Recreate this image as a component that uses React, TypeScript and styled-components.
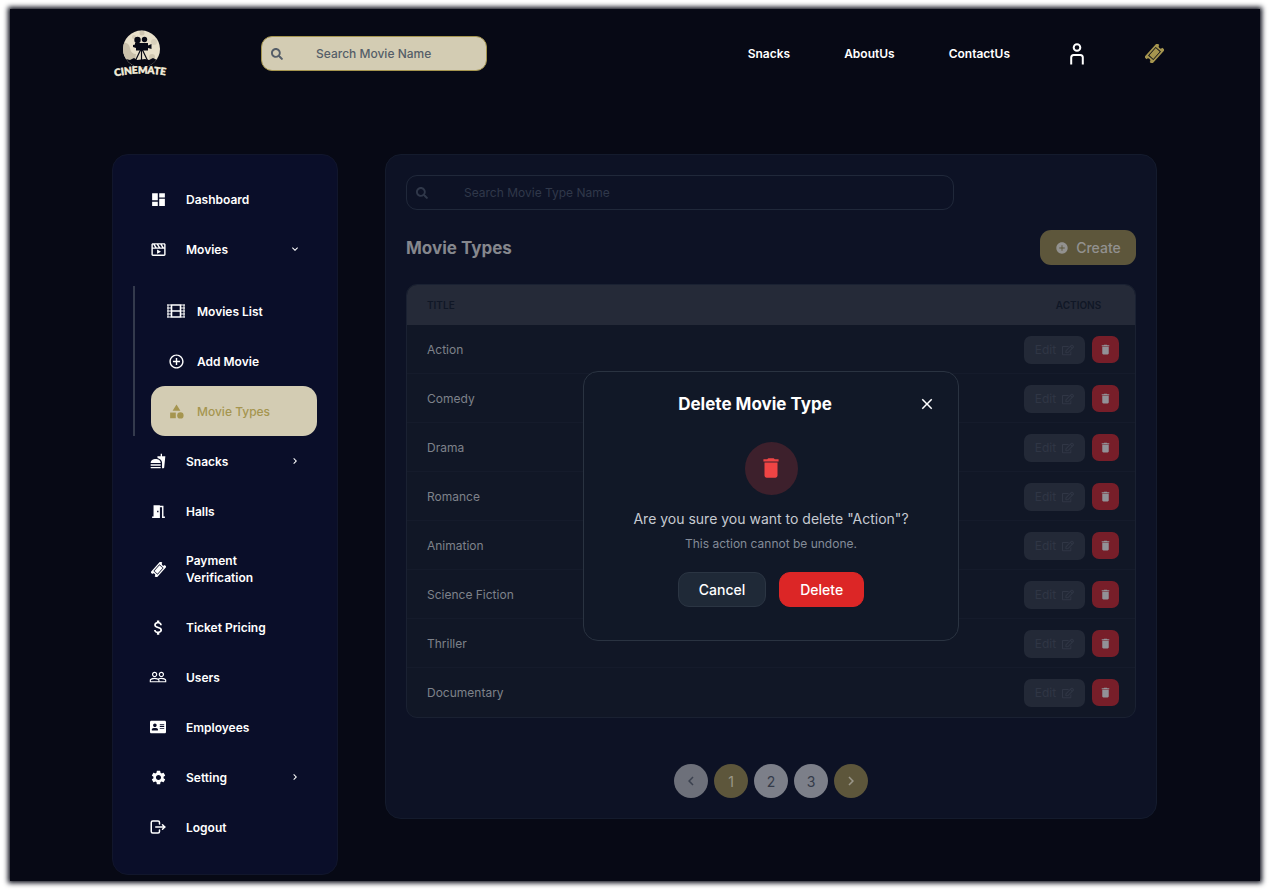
import React from "react";
import styled, { createGlobalStyle, css } from "styled-components";
import {
  MdAddCircleOutline,
  MdAttachMoney,
  MdCategory,
  MdChevronLeft,
  MdChevronRight,
  MdClose,
  MdDashboard,
  MdDelete,
  MdFastfood,
  MdKeyboardArrowDown,
  MdKeyboardArrowRight,
  MdMeetingRoom,
  MdPeopleOutline,
  MdSettings,
} from "react-icons/md";
import { BiMoviePlay } from "react-icons/bi";
import { FaAddressCard, FaRegEdit, FaSearch } from "react-icons/fa";
import { IoIosAddCircle } from "react-icons/io";
import { TbLogout } from "react-icons/tb";

const color = {
  page: "#070915",
  sidebar: "#0a0e29",
  panel: "#0d1225",
  panelLine: "#141b2d",
  gold: "#a5954f",
  sand: "#d3ccb3",
  goldDim: "#5d563b",
  surface: "#111827",
  line: "#2a3341",
  textDim: "#85878d",
};

const GlobalStyle = createGlobalStyle`
  * { box-sizing: border-box; }
  body {
    margin: 0;
    background: #fff;
    color: #fff;
    font-family: Inter, "Open Sans", sans-serif;
    font-size: 12px;
    display: flow-root;
  }
  button, input { font: inherit; color: inherit; }
  button { cursor: pointer; border: 0; background: none; padding: 0; }
  a { color: inherit; text-decoration: none; }
  svg { display: block; flex-shrink: 0; }
`;

const Frame = styled.div`
  margin: 9px 9px 9px 10px;
  background: ${color.page};
  box-shadow: 0 0 5px 2px ${color.page};
`;

const Header = styled.header`
  display: flex;
  align-items: center;
  height: 97px;
  padding: 0 96px 8px 102px;
`;

const LogoLink = styled.a`
  display: block;
  width: 60px;
  margin-right: 89px;
`;

const SearchBox = styled.label<{ $solid?: boolean }>`
  display: flex;
  align-items: center;
  height: 35px;
  border-radius: 11px;
  padding-left: 9px;
  ${(p) =>
    p.$solid
      ? css`
          width: 226px;
          gap: 33px;
          background: ${color.sand};
          border: 1px solid ${color.gold};
          color: #555e68;
          font-weight: 500;
        `
      : css`
          width: 75%;
          gap: 36px;
          border: 1px solid #20283a;
          color: #30384a;
        `}
`;

const SearchInput = styled.input`
  flex: 1;
  min-width: 0;
  border: 0;
  outline: 0;
  padding: 0;
  background: transparent;
  &::placeholder { color: inherit; opacity: 1; }
`;

const TopNav = styled.nav`
  display: flex;
  align-items: center;
  gap: 54px;
  margin-left: auto;
  font-weight: 600;
`;

const NavIcon = styled.a<{ $gold?: boolean }>`
  display: flex;
  justify-content: center;
  width: ${(p) => (p.$gold ? 20 : 26)}px;
  color: ${(p) => (p.$gold ? color.gold : "#fff")};
`;

const Body = styled.div`
  display: flex;
  align-items: flex-start;
  gap: 47px;
  padding: 48px 103px 6px 102px;
`;

const Sidebar = styled.nav`
  flex: 0 0 226px;
  padding: 19px 20px 22px;
  background: ${color.sidebar};
  border: 1px solid #11162c;
  border-radius: 16px;
`;

const MenuItem = styled.a<{ $active?: boolean; $nested?: boolean }>`
  display: flex;
  align-items: center;
  gap: ${(p) => (p.$nested ? 12 : 19)}px;
  min-height: 50px;
  padding: 16px;
  border-radius: 14px;
  font-weight: 600;
  line-height: 17px;
  ${(p) =>
    p.$active &&
    css`
      background: ${color.sand};
      color: ${color.gold};
      font-weight: 500;
    `}
`;

const MenuIcon = styled.span`
  display: flex;
  align-items: center;
  justify-content: center;
  width: 18px;
  height: 18px;
`;

const MenuLabel = styled.span`
  flex: 1;
`;

const SubMenu = styled.div`
  margin-top: 12px;
  padding-left: 16px;
  border-left: 2px solid #343a4d;
`;

const Panel = styled.main`
  position: relative;
  flex: 1;
  min-width: 0;
  padding: 20px;
  background: ${color.panel};
  border: 1px solid ${color.panelLine};
  border-radius: 16px;
`;

const TitleBar = styled.div`
  display: flex;
  align-items: center;
  justify-content: space-between;
  margin: 20px 0 19px;
`;

const Title = styled.h1`
  margin: 0;
  color: ${color.textDim};
  font-size: 17px;
  font-weight: 700;
`;

const CreateButton = styled.button`
  display: flex;
  align-items: center;
  justify-content: center;
  gap: 7px;
  width: 96px;
  height: 35px;
  border-radius: 11px;
  background: ${color.goldDim};
  color: #92918f;
  font-size: 14px;
  font-weight: 500;
`;

const TableCard = styled.div`
  overflow: hidden;
  border: 1px solid #1a2132;
  border-radius: 11px;
  background: #111726;
`;

const Table = styled.table`
  width: 100%;
  border-collapse: collapse;
`;

const HeadCell = styled.th<{ $actions?: boolean }>`
  height: 40px;
  width: ${(p) => (p.$actions ? "113px" : "auto")};
  padding: 0 ${(p) => (p.$actions ? 0 : 20)}px;
  background: #252a38;
  color: #101726;
  font-size: 10px;
  font-weight: 600;
  text-align: ${(p) => (p.$actions ? "center" : "left")};
`;

const Row = styled.tr`
  &:not(:last-child) { box-shadow: inset 0 -1px #151b2b; }
`;

const Cell = styled.td`
  height: 49px;
  padding: 0 16px 0 20px;
  color: #7e828a;
`;

const ActionCell = styled.td`
  padding: 0 16px 0 0;
`;

const RowActions = styled.div`
  display: flex;
  align-items: center;
  justify-content: flex-end;
  gap: 7px;
`;

const EditButton = styled.button`
  display: flex;
  align-items: center;
  justify-content: center;
  gap: 6px;
  width: 61px;
  height: 28px;
  border-radius: 7px;
  background: #232937;
  color: #303645;
`;

const RemoveButton = styled.button`
  display: grid;
  place-items: center;
  width: 27px;
  height: 27px;
  border-radius: 7px;
  background: #771e29;
  color: #929197;
`;

const Pagination = styled.nav`
  display: flex;
  justify-content: center;
  gap: 6px;
  margin-top: 46px;
`;

const PageButton = styled.button<{ $tone: "gold" | "grey" | "muted" }>`
  display: grid;
  place-items: center;
  width: 34px;
  height: 34px;
  border-radius: 50%;
  font-size: 14px;
  background: ${(p) =>
    ({ gold: color.goldDim, grey: "#7c7f89", muted: "#6d707a" })[p.$tone]};
  color: ${(p) =>
    ({ gold: "#9a9689", grey: "#343b49", muted: "#3a404e" })[p.$tone]};
`;

/* Sits over the panel content, a little below its middle. */
const DialogLayer = styled.div`
  position: absolute;
  inset: 38px 0 0;
  display: grid;
  place-items: center;
`;

const Dialog = styled.section`
  width: 376px;
  padding: 20px 22px 33px;
  background: ${color.surface};
  border: 1px solid ${color.line};
  border-radius: 15px;
  text-align: center;
`;

const DialogHeader = styled.div`
  display: flex;
  align-items: center;
  height: 24px;
`;

const DialogTitle = styled.h2`
  flex: 1;
  margin: 0;
  font-size: 17px;
  font-weight: 700;
`;

const CloseButton = styled.button`
  display: flex;
  justify-content: flex-end;
  width: 32px;
`;

const WarningBadge = styled.div`
  display: grid;
  place-items: center;
  width: 53px;
  height: 53px;
  margin: 26px auto 14px;
  border-radius: 50%;
  background: #3d202c;
  color: #ef4444;
`;

const Question = styled.p`
  margin: 0;
  color: #c6cad1;
  font-size: 14px;
  line-height: 20px;
`;

const Hint = styled.p`
  margin: 5px 0 18px;
  color: #838b98;
  line-height: 20px;
`;

const DialogActions = styled.div`
  display: flex;
  justify-content: center;
  gap: 13px;
`;

const DialogButton = styled.button<{ $danger?: boolean }>`
  height: 35px;
  padding: 0 20px;
  border: 1px solid ${(p) => (p.$danger ? "#dc2626" : "#2b3543")};
  border-radius: 11px;
  background: ${(p) => (p.$danger ? "#dc2626" : "#1f2937")};
  font-size: 14px;
  font-weight: 500;
`;

const LogoText = styled.text`
  fill: #f3eddb;
  stroke: #f3eddb;
  stroke-width: 0.5px;
  font-family: Lato, sans-serif;
  font-size: 10px;
  font-weight: 900;
`;

function Logo() {
  return (
    <svg viewBox="0 0 60 50" width="60" height="50" role="img" aria-label="Cinemate">
      <defs>
        <path id="logo-arc" d="M3 47.500Q29 41.500 59 47.500" />
        <clipPath id="moon">
          <circle cx="29.500" cy="20" r="18.500" />
        </clipPath>
      </defs>
      <g clipPath="url(#moon)">
        <rect x="10" width="40" height="40" fill="#e9e1cb" />
        <path d="M10 14q7-1 8 5t6 6l-2 12H10z" fill="#c9c0aa" />
        <circle cx="30" cy="4" r="2.500" fill="#d0c7b1" />
        <circle cx="22" cy="8" r="2" fill="#d5ccb7" />
        <circle cx="42" cy="13" r="3" fill="#d8d0bb" />
        <circle cx="40" cy="28" r="3" fill="#d0c7b1" />
        <path d="M8 33l6-3 4 1 4-2 3 2 8-1 4 1 4-2 4 2 5-1v10H8z" fill={color.page} />
      </g>
      <g fill={color.page}>
        <circle cx="25.500" cy="11" r="3.200" />
        <circle cx="32.500" cy="10.500" r="2.700" />
        <path d="M23 14h13v2.500l3.500-1.500v5l-3.500-1v2.500H24v-2.500l-3-1v-2l2-.5z" />
      </g>
      <path d="M29.500 21v11M28.500 21l-5 10.500M30.500 21l5 10.500" stroke={color.page} strokeWidth="1.200" />
      <LogoText>
        <textPath href="#logo-arc">CINEMATE</textPath>
      </LogoText>
    </svg>
  );
}

type IconProps = { size?: number };

function PersonIcon() {
  return (
    <svg viewBox="0 0 14 22" width="14" height="22" fill="none" stroke="currentColor" strokeWidth="2">
      <circle cx="7" cy="4.500" r="3.300" />
      <path d="M1.200 21.500v-7q0-2.500 2.500-2.500h6.600q2.500 0 2.500 2.500v7" />
    </svg>
  );
}

function TicketIcon({ size = 20 }: IconProps) {
  return (
    <svg viewBox="0 0 20 20" width={size} height={size} fill="currentColor">
      <g transform="rotate(-48 10 10)">
        <path
          fillRule="evenodd"
          d="M0 4.500h20v3.300a2.200 2.200 0 0 0 0 4.400v3.300H0v-3.300a2.200 2.200 0 0 0 0-4.400zM4 6.300v7.400h12V6.300zM4.900 7.200h10.200v5.600H4.900z"
        />
      </g>
    </svg>
  );
}

function FilmIcon({ size = 18 }: IconProps) {
  return (
    <svg viewBox="0 0 18 14" width={size} height={(size * 14) / 18} fill="none" stroke="currentColor">
      <path d="M4.500 1h9v12h-9zM4.500 7h9" strokeWidth="1.600" />
      <path d="M1 .5v13M17 .5v13" strokeWidth="1" />
      <path d="M0 1h4M0 4h4M0 7h4M0 10h4M0 13h4M14 1h4M14 4h4M14 7h4M14 10h4M14 13h4" strokeWidth="1.200" />
    </svg>
  );
}

type Icon = React.ComponentType<IconProps>;

type Entry = {
  label: React.ReactNode;
  icon: Icon;
  size?: number;
  more?: boolean;
};

const subEntries: Entry[] = [
  { label: "Movies List", icon: FilmIcon, size: 18 },
  { label: "Add Movie", icon: MdAddCircleOutline },
  { label: "Movie Types", icon: MdCategory },
];

const entries: Entry[] = [
  { label: "Snacks", icon: MdFastfood, size: 16, more: true },
  { label: "Halls", icon: MdMeetingRoom },
  { label: <>Payment<br />Verification</>, icon: TicketIcon, size: 15 },
  { label: "Ticket Pricing", icon: MdAttachMoney, size: 19 },
  { label: "Users", icon: MdPeopleOutline, size: 18 },
  { label: "Employees", icon: FaAddressCard, size: 16 },
  { label: "Setting", icon: MdSettings, more: true },
  { label: "Logout", icon: TbLogout, size: 18 },
];

function MenuEntry({
  entry,
  nested,
  active,
  chevron: Chevron,
}: {
  entry: Entry;
  nested?: boolean;
  active?: boolean;
  chevron?: Icon;
}) {
  const EntryIcon = entry.icon;
  return (
    <MenuItem href="#" $nested={nested} $active={active}>
      <MenuIcon>
        <EntryIcon size={entry.size ?? 17} />
      </MenuIcon>
      <MenuLabel>{entry.label}</MenuLabel>
      {Chevron && <Chevron size={12} />}
    </MenuItem>
  );
}

const movieTypes = [
  "Action",
  "Comedy",
  "Drama",
  "Romance",
  "Animation",
  "Science Fiction",
  "Thriller",
  "Documentary",
];

export default function App() {
  return (
    <>
      <GlobalStyle />
      <Frame>
        <Header>
          <LogoLink href="#">
            <Logo />
          </LogoLink>
          <SearchBox $solid>
            <FaSearch size={12} />
            <SearchInput aria-label="Search movies" placeholder="Search Movie Name" />
          </SearchBox>
          <TopNav>
            <a href="#">Snacks</a>
            <a href="#">AboutUs</a>
            <a href="#">ContactUs</a>
            <NavIcon href="#" aria-label="Profile">
              <PersonIcon />
            </NavIcon>
            <NavIcon href="#" aria-label="Tickets" $gold>
              <TicketIcon size={19} />
            </NavIcon>
          </TopNav>
        </Header>

        <Body>
          <Sidebar>
            <MenuEntry entry={{ label: "Dashboard", icon: MdDashboard }} />
            <MenuEntry
              entry={{ label: "Movies", icon: BiMoviePlay }}
              chevron={MdKeyboardArrowDown}
            />
            <SubMenu>
              {subEntries.map((entry, i) => (
                <MenuEntry key={i} entry={entry} nested active={i === 2} />
              ))}
            </SubMenu>
            {entries.map((entry, i) => (
              <MenuEntry
                key={i}
                entry={entry}
                chevron={entry.more ? MdKeyboardArrowRight : undefined}
              />
            ))}
          </Sidebar>

          <Panel>
            <SearchBox>
              <FaSearch size={12} />
              <SearchInput
                aria-label="Search movie types"
                placeholder="Search Movie Type Name"
              />
            </SearchBox>
            <TitleBar>
              <Title>Movie Types</Title>
              <CreateButton>
                <IoIosAddCircle size={14} />
                Create
              </CreateButton>
            </TitleBar>
            <TableCard>
              <Table>
                <thead>
                  <tr>
                    <HeadCell>TITLE</HeadCell>
                    <HeadCell $actions>ACTIONS</HeadCell>
                  </tr>
                </thead>
                <tbody>
                  {movieTypes.map((name) => (
                    <Row key={name}>
                      <Cell>{name}</Cell>
                      <ActionCell>
                        <RowActions>
                          <EditButton>
                            Edit
                            <FaRegEdit size={12} />
                          </EditButton>
                          <RemoveButton aria-label={`Delete ${name}`}>
                            <MdDelete size={13} />
                          </RemoveButton>
                        </RowActions>
                      </ActionCell>
                    </Row>
                  ))}
                </tbody>
              </Table>
            </TableCard>
            <Pagination aria-label="Pages">
              <PageButton $tone="muted" aria-label="Previous page">
                <MdChevronLeft size={18} />
              </PageButton>
              <PageButton $tone="gold">1</PageButton>
              <PageButton $tone="grey">2</PageButton>
              <PageButton $tone="grey">3</PageButton>
              <PageButton $tone="gold" aria-label="Next page">
                <MdChevronRight size={18} />
              </PageButton>
            </Pagination>

            <DialogLayer>
              <Dialog role="dialog" aria-labelledby="dialog-title">
                <DialogHeader>
                  <DialogTitle id="dialog-title">Delete Movie Type</DialogTitle>
                  <CloseButton aria-label="Close">
                    <MdClose size={18} />
                  </CloseButton>
                </DialogHeader>
                <WarningBadge>
                  <MdDelete size={26} />
                </WarningBadge>
                <Question>Are you sure you want to delete "Action"?</Question>
                <Hint>This action cannot be undone.</Hint>
                <DialogActions>
                  <DialogButton>Cancel</DialogButton>
                  <DialogButton $danger>Delete</DialogButton>
                </DialogActions>
              </Dialog>
            </DialogLayer>
          </Panel>
        </Body>
      </Frame>
    </>
  );
}
